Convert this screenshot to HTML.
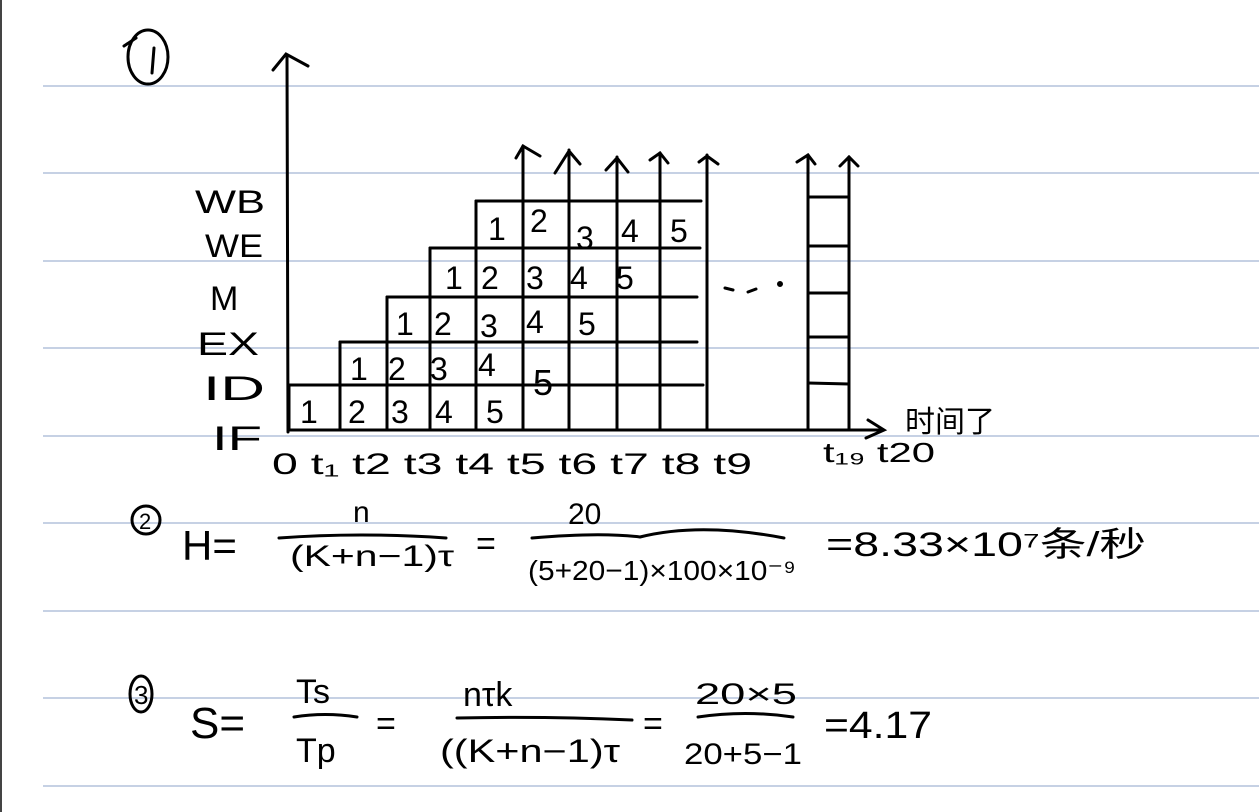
<!DOCTYPE html>
<html><head><meta charset="utf-8"><style>
html,body{margin:0;padding:0;background:#fff;}
svg{display:block;}
text{font-family:"Liberation Sans","Noto Sans CJK SC",sans-serif;fill:#000;}
</style></head><body>
<svg width="1259" height="812" viewBox="0 0 1259 812" xmlns="http://www.w3.org/2000/svg">
<rect x="0" y="0" width="1259" height="812" fill="#fff"/>
<rect x="0" y="0" width="2" height="812" fill="#444"/>
<g stroke="#b4c2dc" stroke-width="1.5">
<line x1="43" y1="86" x2="1259" y2="86"/>
<line x1="43" y1="173" x2="1259" y2="173"/>
<line x1="43" y1="261" x2="1259" y2="261"/>
<line x1="43" y1="348" x2="1259" y2="348"/>
<line x1="43" y1="436" x2="1259" y2="436"/>
<line x1="43" y1="523" x2="1259" y2="523"/>
<line x1="43" y1="611" x2="1259" y2="611"/>
<line x1="43" y1="698" x2="1259" y2="698"/>
<line x1="43" y1="786" x2="1259" y2="786"/>
</g>
<g stroke="#000" stroke-width="3" fill="none" stroke-linecap="round">
<ellipse cx="148" cy="57" rx="20" ry="27"/>
<path d="M124 46 L136 38"/>
<line x1="154" y1="48" x2="152" y2="73"/>
<line x1="287" y1="55" x2="288" y2="432"/>
<path d="M273 70 L286 54 L308 66"/>
<line x1="289" y1="430" x2="880" y2="430"/>
<path d="M868 420 L884 430 L866 438"/>
<line x1="289" y1="385" x2="703" y2="385"/>
<line x1="340" y1="342" x2="697" y2="342"/>
<line x1="387" y1="297" x2="697" y2="297"/>
<line x1="430" y1="248" x2="700" y2="248"/>
<line x1="476" y1="201" x2="701" y2="201"/>
<line x1="289" y1="385" x2="289" y2="430"/>
<line x1="340" y1="342" x2="340" y2="430"/>
<line x1="387" y1="297" x2="387" y2="430"/>
<line x1="430" y1="248" x2="430" y2="430"/>
<line x1="476" y1="201" x2="476" y2="430"/>
<line x1="523" y1="146" x2="523" y2="430"/>
<line x1="569" y1="150" x2="569" y2="430"/>
<line x1="617" y1="157" x2="617" y2="430"/>
<line x1="660" y1="153" x2="660" y2="430"/>
<line x1="707" y1="155" x2="707" y2="430"/>
<line x1="808" y1="155" x2="808" y2="430"/>
<line x1="849" y1="157" x2="849" y2="430"/>
<path d="M516 158 L523 146 L540 156"/>
<path d="M555 173 L569 151 L580 164"/>
<path d="M606 170 L617 158 L628 172"/>
<path d="M650 160 L660 153 L668 163"/>
<path d="M699 162 L707 156 L718 164"/>
<path d="M797 162 L808 155 L815 164"/>
<path d="M840 166 L849 157 L858 166"/>
<line x1="808" y1="197" x2="849" y2="197"/>
<line x1="808" y1="246" x2="849" y2="246"/>
<line x1="808" y1="293" x2="849" y2="293"/>
<line x1="808" y1="337" x2="849" y2="337"/>
<line x1="808" y1="383" x2="849" y2="384"/>
<path d="M725 288 L733 290"/><path d="M748 292 L756 289"/><circle cx="780" cy="284" r="1.5"/>
<circle cx="146" cy="520" r="14"/>
<ellipse cx="141" cy="694" rx="11" ry="18"/>
<path d="M279 538 Q360 532 446 538"/>
<path d="M532 538 Q600 532 640 537 Q700 522 784 538"/>
<path d="M294 717 Q325 712 357 717"/>
<path d="M457 718 Q545 716 632 720"/>
<path d="M698 717 Q745 710 793 717"/>
</g>
<g font-size="30">
<text x="139" y="529" font-size="22">2</text>
<text x="134" y="704" font-size="26">3</text>
<text x="195" y="213" font-size="32" textLength="70" lengthAdjust="spacingAndGlyphs">WB</text>
<text x="205" y="257" font-size="32" textLength="58" lengthAdjust="spacingAndGlyphs">WE</text>
<text x="210" y="310" font-size="34">M</text>
<text x="197" y="355" font-size="32" textLength="62" lengthAdjust="spacingAndGlyphs">EX</text>
<text x="203" y="400" font-size="34" textLength="62" lengthAdjust="spacingAndGlyphs">ID</text>
<text x="212" y="450" font-size="34" textLength="50" lengthAdjust="spacingAndGlyphs">IF</text>
<text x="300" y="423" font-size="32">1</text><text x="348" y="423" font-size="32">2</text><text x="391" y="423" font-size="32">3</text><text x="435" y="423" font-size="32">4</text><text x="486" y="423" font-size="32">5</text>
<text x="350" y="380" font-size="32">1</text><text x="388" y="380" font-size="32">2</text><text x="430" y="380" font-size="32">3</text><text x="478" y="376" font-size="32">4</text><text x="533" y="395" font-size="36">5</text>
<text x="396" y="335" font-size="32">1</text><text x="434" y="335" font-size="32">2</text><text x="480" y="337" font-size="32">3</text><text x="526" y="333" font-size="32">4</text><text x="578" y="335" font-size="32">5</text>
<text x="445" y="289" font-size="32">1</text><text x="481" y="289" font-size="32">2</text><text x="526" y="289" font-size="32">3</text><text x="570" y="289" font-size="32">4</text><text x="616" y="289" font-size="32">5</text>
<text x="488" y="240" font-size="32">1</text><text x="530" y="232" font-size="32">2</text><text x="576" y="249" font-size="32">3</text><text x="621" y="242" font-size="32">4</text><text x="670" y="242" font-size="32">5</text>
<text x="272" y="474" font-size="30" textLength="480" lengthAdjust="spacingAndGlyphs">0 t₁ t2 t3 t4 t5 t6 t7 t8 t9</text>
<text x="823" y="462" font-size="28" textLength="112" lengthAdjust="spacingAndGlyphs">t₁₉ t20</text>
<text x="905" y="432" font-size="30">时间了</text>
<text x="182" y="560" font-size="42">H=</text>
<text x="353" y="522" font-size="30">n</text>
<text x="290" y="566" font-size="30" textLength="164" lengthAdjust="spacingAndGlyphs">(K+n−1)τ</text>
<text x="476" y="555" font-size="34">=</text>
<text x="568" y="524" font-size="30">20</text>
<text x="528" y="580" font-size="28" textLength="268" lengthAdjust="spacingAndGlyphs">(5+20−1)×100×10⁻⁹</text>
<text x="826" y="556" font-size="34" textLength="320" lengthAdjust="spacingAndGlyphs">=8.33×10⁷条/秒</text>
<text x="190" y="738" font-size="44">S=</text>
<text x="296" y="703" font-size="34">Ts</text>
<text x="296" y="762" font-size="34">Tp</text>
<text x="376" y="735" font-size="34">=</text>
<text x="463" y="706" font-size="34">nτk</text>
<text x="440" y="762" font-size="32" textLength="180" lengthAdjust="spacingAndGlyphs">((K+n−1)τ</text>
<text x="643" y="735" font-size="34">=</text>
<text x="695" y="704" font-size="30" textLength="102" lengthAdjust="spacingAndGlyphs">20×5</text>
<text x="684" y="764" font-size="30" textLength="118" lengthAdjust="spacingAndGlyphs">20+5−1</text>
<text x="824" y="738" font-size="38" textLength="108" lengthAdjust="spacingAndGlyphs">=4.17</text>
</g>
</svg>
</body></html>
